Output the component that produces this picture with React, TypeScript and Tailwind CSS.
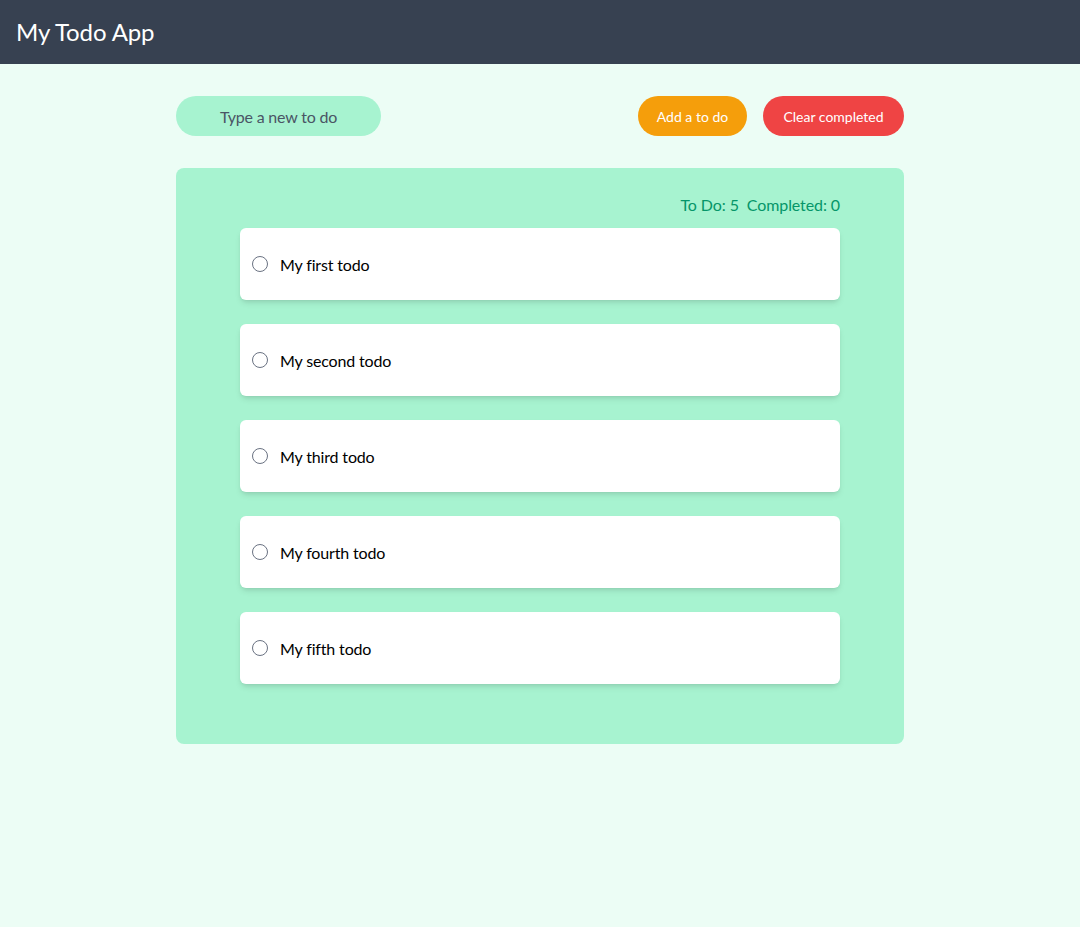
import { useState } from 'react';

type Todo = { id: number; text: string; done: boolean };

const initial: Todo[] = [
  { id: 1, text: 'My first todo', done: false },
  { id: 2, text: 'My second todo', done: false },
  { id: 3, text: 'My third todo', done: false },
  { id: 4, text: 'My fourth todo', done: false },
  { id: 5, text: 'My fifth todo', done: false },
];

export default function App() {
  const [todos, setTodos] = useState<Todo[]>(initial);
  const [text, setText] = useState('');

  const completed = todos.filter((t) => t.done).length;

  const addTodo = () => {
    if (!text.trim()) return;
    setTodos([...todos, { id: Date.now(), text, done: false }]);
    setText('');
  };

  return (
    <div className="min-h-screen bg-[#ecfdf5] font-['Lato',sans-serif]">
      {/* Header */}
      <header className="h-16 bg-[#374151] flex items-center px-4">
        <h1 className="text-2xl text-white tracking-[-0.1px]">My Todo App</h1>
      </header>

      <main className="w-[728px] mx-auto pt-8">
        <div className="flex items-center justify-between">
          <input
            type="text"
            placeholder="Type a new to do"
            value={text}
            onChange={(e) => setText(e.target.value)}
            className="w-[205px] h-10 rounded-full bg-[#a7f3d0] text-center text-base tracking-[-0.2px] text-gray-600 placeholder:text-gray-600 focus:outline-none"
          />
          <div className="flex items-center gap-4">
            <button
              onClick={addTodo}
              className="h-10 w-[109px] pt-px rounded-full bg-[#f59e0b] text-sm text-white"
            >
              Add a to do
            </button>
            <button
              onClick={() => setTodos(todos.filter((t) => !t.done))}
              className="h-10 w-[141px] pt-px rounded-full bg-[#ef4444] text-sm text-white"
            >
              Clear completed
            </button>
          </div>
        </div>

        {/* Todo list */}
        <div className="mt-8 bg-[#a7f3d0] rounded-lg px-16 pt-[25px] pb-9">
          <div className="flex justify-end gap-2 text-base leading-6 tracking-[-0.1px] text-[#059669]">
            <span>To Do: {todos.length - completed}</span>
            <span>Completed: {completed}</span>
          </div>
          <ul className="mt-[11px]">
            {todos.map((todo) => (
              <li
                key={todo.id}
                onClick={() =>
                  setTodos(todos.map((t) => (t.id === todo.id ? { ...t, done: !t.done } : t)))
                }
                className="h-[72px] mb-6 bg-white rounded-md shadow-md flex items-center px-3 cursor-pointer"
              >
                <span
                  className={`w-4 h-4 rounded-full border border-gray-500 mr-3 ${
                    todo.done ? 'bg-[#059669]' : ''
                  }`}
                ></span>
                <span
                  className={`pt-0.5 text-base tracking-[-0.15px] text-black ${
                    todo.done ? 'line-through' : ''
                  }`}
                >
                  {todo.text}
                </span>
              </li>
            ))}
          </ul>
        </div>
      </main>
    </div>
  );
}
